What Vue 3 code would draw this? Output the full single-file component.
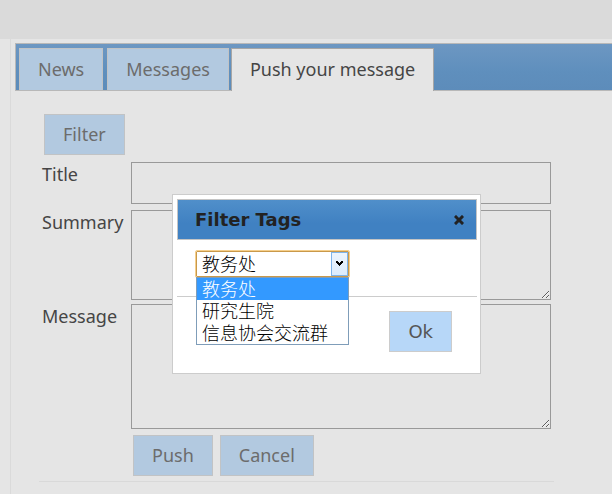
<script setup>
import { ref } from 'vue'

const tabs = ['News', 'Messages', 'Push your message']
const activeTab = ref('Push your message')
const tags = ['教务处', '研究生院', '信息协会交流群']
const selectedTag = ref(tags[0])
const listOpen = ref(true)
const dialogOpen = ref(true)
const title = ref('')
const summary = ref('')
const message = ref('')

function choose(tag) {
  selectedTag.value = tag
  listOpen.value = false
}
</script>

<template>
  <div class="page">
    <header class="banner"></header>
    <main class="panel">
      <nav class="tabs" role="tablist">
        <button
          v-for="tab in tabs"
          :key="tab"
          type="button"
          role="tab"
          class="tab"
          :class="{ active: tab === activeTab }"
          :aria-selected="tab === activeTab"
          @click="activeTab = tab"
        >{{ tab }}</button>
      </nav>

      <form class="form" @submit.prevent>
        <div class="toolbar">
          <button type="button" class="btn" @click="dialogOpen = true">Filter</button>
        </div>
        <div class="fields">
          <label for="title">Title</label>
          <input id="title" v-model="title" class="field" type="text">
          <label for="summary">Summary</label>
          <textarea id="summary" v-model="summary" class="field summary"></textarea>
          <label for="message">Message</label>
          <textarea id="message" v-model="message" class="field message"></textarea>
        </div>
        <div class="actions">
          <button type="submit" class="btn">Push</button>
          <button type="reset" class="btn">Cancel</button>
        </div>
      </form>
    </main>

    <section v-if="dialogOpen" class="dialog" role="dialog" aria-labelledby="dialog-title">
      <div class="dialog-head">
        <h2 id="dialog-title">Filter Tags</h2>
        <button type="button" class="close" aria-label="Close" @click="dialogOpen = false">
          <svg width="10" height="10" viewBox="0 0 10 10" aria-hidden="true">
            <path d="M2 2L8 8M8 2L2 8" stroke="#222" stroke-width="3" stroke-linecap="square" />
          </svg>
        </button>
      </div>
      <div class="dialog-body">
        <div class="combo">
          <select v-model="selectedTag" aria-label="Tag">
            <option v-for="tag in tags" :key="tag" :value="tag">{{ tag }}</option>
          </select>
          <span class="arrow">
            <svg width="7" height="6" viewBox="0 0 7 6" shape-rendering="crispEdges" aria-hidden="true">
              <path d="M0 0h2v1h1v1h1v-1h1v-1h2v2h-1v1h-1v1h-1v1h-1v-1h-1v-1h-1v-1h-1z" fill="#000" />
            </svg>
          </span>
          <ul v-if="listOpen" class="options" role="listbox">
            <li
              v-for="tag in tags"
              :key="tag"
              role="option"
              :aria-selected="tag === selectedTag"
              :class="{ selected: tag === selectedTag }"
              @click="choose(tag)"
            >{{ tag }}</li>
          </ul>
        </div>
      </div>
      <div class="dialog-foot">
        <button type="button" class="btn ok" @click="dialogOpen = false">Ok</button>
      </div>
    </section>
  </div>
</template>

<style>
body {
  background: #e5e5e5;
}
</style>

<style scoped>
.page {
  position: relative;
  box-sizing: border-box;
  min-height: 100vh;
  overflow: hidden;
  color: #454545;
  font-family: "Noto Sans", "Noto Sans CJK SC", sans-serif;
  font-size: 18px;
  line-height: 25px;
}
.page * {
  box-sizing: border-box;
}
.banner {
  height: 39px;
  background: #dadada;
}
.panel {
  min-height: calc(100vh - 39px);
  margin-left: 10px;
  padding: 4px 0 12px 4px;
  border-left: 1px solid #dadada;
}
.tabs {
  display: flex;
  gap: 4px;
  height: 48px;
  padding: 4px 3px 0;
  border: 1px solid #b8b8b8;
  border-right: 0;
  background: linear-gradient(#6d97c2, #5f8fbd 60%, #5d8cba);
}
button {
  margin: 0;
  font: inherit;
  cursor: pointer;
}
.tab {
  height: 42px;
  padding: 0 18px;
  border: 1px solid #c1c3c5;
  border-bottom: 0;
  background: #b2c9e0;
  color: #6c6c6c;
}
.tab.active {
  height: 43px;
  margin-left: -2px;
  padding-bottom: 2px;
  border-color: #a6a6a6;
  background: #e5e5e5;
  color: #454545;
}
.form {
  max-width: 515px;
  margin: 23px 0 0 24px;
  padding-bottom: 5px;
  border-bottom: 1px solid #d9d9d9;
}
.btn {
  height: 41px;
  padding: 0 18px;
  border: 1px solid #c1c3c5;
  background: #b2c9e0;
  color: #6c6c6c;
}
.toolbar {
  display: flex;
  padding-left: 5px;
  margin-bottom: 7px;
}
.fields {
  display: grid;
  grid-template-columns: 89px 1fr;
  padding: 0 3px;
}
.field {
  display: block;
  width: 100%;
  height: 42px;
  margin: 0 0 6px;
  padding: 8px;
  border: 1px solid #999;
  border-radius: 0;
  background: transparent;
  color: inherit;
  font: inherit;
  outline: 0;
}
.summary {
  height: 90px;
  margin-bottom: 4px;
}
.message {
  height: 125px;
}
.actions {
  display: flex;
  gap: 7px;
  padding-left: 94px;
}
.dialog {
  position: absolute;
  top: 194px;
  left: 172px;
  width: 309px;
  padding: 4px 3px 21px 4px;
  border: 1px solid #ccc;
  background: #fff;
  font-family: "DejaVu Sans", sans-serif;
}
.dialog-head {
  display: flex;
  align-items: center;
  justify-content: space-between;
  height: 41px;
  padding: 0 12px 0 17px;
  border: 1px solid #c5c5c5;
  background: linear-gradient(#508fca, #4081c2 60%, #4081c2);
}
h2 {
  margin: 0;
  color: #222;
  font-size: 18px;
}
.close {
  display: flex;
  padding: 0;
  border: 0;
  background: none;
}
.dialog-body {
  padding: 11px 18px 19px 19px;
}
.combo {
  position: relative;
  width: 153px;
  font-family: "Liberation Sans", "Noto Sans CJK SC", sans-serif;
  font-weight: 300;
}
select {
  display: block;
  width: 100%;
  height: 26px;
  padding: 2px 22px 0 5px;
  border: 1px solid #c9994a;
  border-radius: 1px;
  outline: 1px solid #f5cf8c;
  background: #fff;
  color: #000;
  font: inherit;
  line-height: 22px;
  appearance: none;
}
.arrow {
  position: absolute;
  top: 1px;
  right: 1px;
  display: grid;
  place-items: center;
  width: 17px;
  height: 24px;
  border: 1px solid #7eb4ea;
  background: linear-gradient(#ecf4fc, #dcecfc);
  pointer-events: none;
}
.options {
  position: absolute;
  top: 26px;
  left: 0;
  width: 100%;
  margin: 0;
  padding: 0;
  border: 1px solid #7f9db9;
  background: #fff;
  color: #000;
  line-height: 20px;
  list-style: none;
}
.options li {
  padding: 2px 0 0 5px;
  white-space: nowrap;
}
.options .selected {
  background: #39f;
  color: #fff;
}
.dialog-foot {
  display: flex;
  justify-content: flex-end;
  padding: 14px 25px 0 0;
  border-top: 1px solid #ccc;
}
.btn.ok {
  border-color: #ccc;
  background: #b7d7f8;
  color: #555;
}
</style>
